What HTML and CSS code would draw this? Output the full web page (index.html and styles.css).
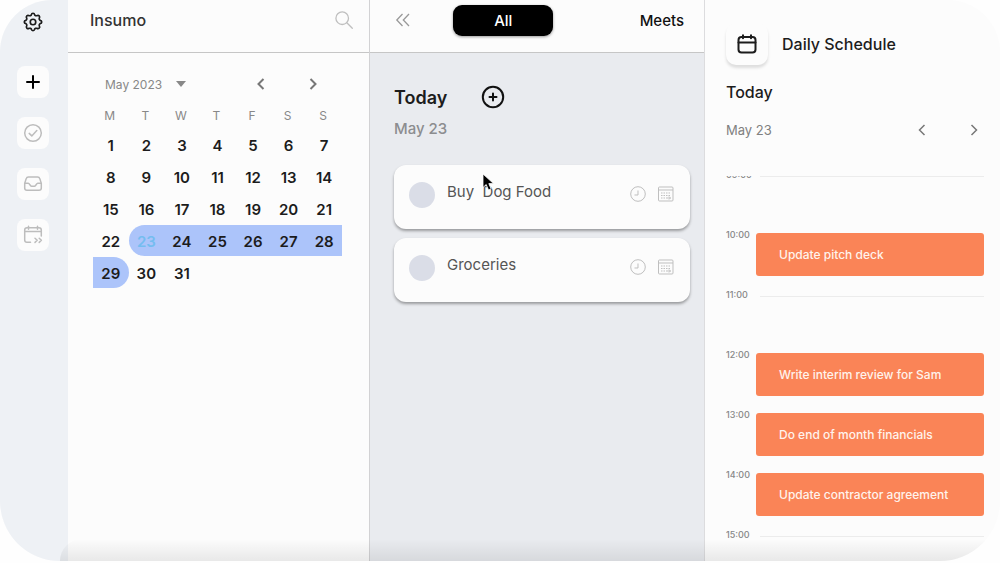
FILE: index.html
```html
<!DOCTYPE html>
<html lang="en">

<head>
    <meta charset="UTF-8">
    <meta name="viewport" content="width=device-width, initial-scale=1.0">
    <title>Insumo</title>
    <link rel="stylesheet" href="styles.css">
</head>

<body>
    <div class="app">
        <nav class="sidebar">
            <button class="side-btn settings" aria-label="Settings">
                <svg width="20" height="20" viewBox="0 0 24 24" fill="none" stroke="currentColor" stroke-width="2" stroke-linejoin="round">
                    <path d="M10 3.600Q10.300 1.500 12 1.500T14 3.600L15.200 4.500 16.500 4.500Q18.200 3.300 19.400 4.600T19.500 7.500L19.500 8.800 20.400 10Q22.500 10.300 22.500 12T20.400 14L19.500 15.200 19.500 16.500Q20.700 18.200 19.400 19.400T16.500 19.500L15.200 19.500 14 20.400Q13.700 22.500 12 22.500T10 20.400L8.800 19.500 7.500 19.500Q5.800 20.700 4.600 19.400T4.500 16.500L4.500 15.200 3.600 14Q1.500 13.700 1.500 12T3.600 10L4.500 8.800 4.500 7.500Q3.300 5.800 4.600 4.600T7.500 4.500L8.800 4.500z" />
                    <circle cx="12" cy="12" r="3.300" />
                </svg>
            </button>
            <button class="side-btn dark" aria-label="Add">
                <svg width="18" height="18" viewBox="0 0 18 18" fill="none" stroke="currentColor" stroke-width="2" stroke-linecap="round">
                    <path d="M9 3v12M3 9h12" />
                </svg>
            </button>
            <button class="side-btn" aria-label="Tasks">
                <svg width="20" height="20" viewBox="0 0 20 20" fill="none" stroke="currentColor" stroke-width="1.5" stroke-linecap="round" stroke-linejoin="round">
                    <circle cx="10" cy="10" r="8.3" />
                    <path d="M6.2 10.4l2.6 2.5 5-5.3" />
                </svg>
            </button>
            <button class="side-btn" aria-label="Inbox">
                <svg width="20" height="20" viewBox="0 0 20 20" fill="none" stroke="currentColor" stroke-width="1.5" stroke-linecap="round" stroke-linejoin="round">
                    <path d="M5.5 3h9c1.5 0 2 .7 2.400 1.900l1.400 4.600v4.500c0 1.500-.8 2.300-2.300 2.300H4c-1.500 0-2.300-.8-2.300-2.300V9.500l1.400-4.600C3.500 3.700 4 3 5.500 3z" />
                    <path d="M1.900 9.300h3.300c1.600 0 1.600 2.900 3.300 2.900h3c1.700 0 1.700-2.900 3.300-2.900h3.300" />
                </svg>
            </button>
            <button class="side-btn" aria-label="Upcoming">
                <svg width="20" height="20" viewBox="0 0 20 20" fill="none" stroke="currentColor" stroke-width="1.500" stroke-linecap="round" stroke-linejoin="round">
                    <path d="M7.500 17.300H4c-1.500 0-2.300-.8-2.300-2.300V5c0-1.500.8-2.300 2.300-2.300h12c1.500 0 2.300.8 2.300 2.300v6M1.700 6.600h16.600M5.500 1.200v3M14.500 1.200v3M12 13.200l2.200 2.100-2.200 2.100M16.200 13.200l2.200 2.100-2.200 2.100" />
                </svg>
            </button>
        </nav>

        <section class="calendar-panel">
            <header class="bar">
                <h1>Insumo</h1>
                <button class="icon-btn pale" aria-label="Search">
                    <svg width="20" height="20" viewBox="0 0 20 20" fill="none" stroke="currentColor" stroke-width="1.300" stroke-linecap="round">
                        <circle cx="8.200" cy="8.200" r="6.300" />
                        <path d="M12.800 12.800l5.500 5.500" />
                    </svg>
                </button>
            </header>
            <div class="calendar">
                <div class="month-row">
                    <div class="month">
                        <select id="month" aria-label="Month">
                            <option>May 2023</option>
                        </select>
                        <svg width="10" height="6" viewBox="0 0 10 6" fill="currentColor">
                            <path d="M0 0h10L5 6z" />
                        </svg>
                    </div>
                    <div class="month-nav">
                        <button class="icon-btn" aria-label="Previous month">
                            <svg width="20" height="20" viewBox="0 0 20 20" fill="none" stroke="currentColor" stroke-width="2">
                                <path d="M12.500 5l-5 5 5 5" />
                            </svg>
                        </button>
                        <button class="icon-btn" aria-label="Next month">
                            <svg width="20" height="20" viewBox="0 0 20 20" fill="none" stroke="currentColor" stroke-width="2">
                                <path d="M7.500 5l5 5-5 5" />
                            </svg>
                        </button>
                    </div>
                </div>
                <table class="days">
                    <thead>
                        <tr><th>M</th><th>T</th><th>W</th><th>T</th><th>F</th><th>S</th><th>S</th></tr>
                    </thead>
                    <tbody>
                        <tr><td>1</td><td>2</td><td>3</td><td>4</td><td>5</td><td>6</td><td>7</td></tr>
                        <tr><td>8</td><td>9</td><td>10</td><td>11</td><td>12</td><td>13</td><td>14</td></tr>
                        <tr><td>15</td><td>16</td><td>17</td><td>18</td><td>19</td><td>20</td><td>21</td></tr>
                        <tr>
                            <td>22</td>
                            <td class="range first">23</td>
                            <td class="range">24</td>
                            <td class="range">25</td>
                            <td class="range">26</td>
                            <td class="range">27</td>
                            <td class="range">28</td>
                        </tr>
                        <tr><td class="range last">29</td><td>30</td><td>31</td><td></td><td></td><td></td><td></td></tr>
                    </tbody>
                </table>
            </div>
        </section>

        <main class="tasks-panel">
            <header class="bar">
                <button class="icon-btn collapse" aria-label="Collapse">
                    <svg width="16" height="16" viewBox="0 0 16 16" fill="none" stroke="currentColor" stroke-width="1.300">
                        <path d="M7.500 2L1.800 8l5.700 6M14 2L8.300 8l5.700 6" />
                    </svg>
                </button>
                <button class="tab active">All</button>
                <button class="tab">Meets</button>
            </header>
            <div class="tasks">
                <div class="tasks-title">
                    <h2>Today</h2>
                    <button class="icon-btn add" aria-label="Add task">
                        <svg width="24" height="24" viewBox="0 0 24 24" fill="none" stroke="currentColor" stroke-width="2" stroke-linecap="round">
                            <circle cx="12" cy="12" r="10.200" />
                            <path d="M12 8.500v7M8.500 12h7" />
                        </svg>
                    </button>
                </div>
                <p class="tasks-date">May 23</p>
                <div class="card">
                    <input type="checkbox" id="task1">
                    <label for="task1">Buy&nbsp; Dog Food</label>
                    <button class="icon-btn pale" aria-label="Set time">
                        <svg width="18" height="18" viewBox="0 0 18 18" fill="none" stroke="currentColor">
                            <circle cx="9" cy="9" r="7.300" />
                            <path d="M9 5.500V10H5.500" />
                        </svg>
                    </button>
                    <button class="icon-btn pale" aria-label="Set date">
                        <svg width="18" height="18" viewBox="0 0 18 18" fill="none" stroke="currentColor">
                            <rect x="1.500" y="2" width="14.500" height="14" rx="1" />
                            <path d="M1.500 5h14.500" />
                            <path d="M4 8h10M4 10.500h10M4 13h6" stroke-dasharray="1.500 1" />
                            <path d="M10 13h3.500M12 11.500l1.500 1.500-1.500 1.500" />
                        </svg>
                    </button>
                    <svg class="cursor" width="13" height="19" viewBox="0 0 13 19" stroke="#fff" stroke-width=".8">
                        <path d="M1 1v13.500l3.200-3 2.300 5.500 2.600-1.100-2.300-5.300h4.700z" />
                    </svg>
                </div>
                <div class="card">
                    <input type="checkbox" id="task2">
                    <label for="task2">Groceries</label>
                    <button class="icon-btn pale" aria-label="Set time">
                        <svg width="18" height="18" viewBox="0 0 18 18" fill="none" stroke="currentColor">
                            <circle cx="9" cy="9" r="7.300" />
                            <path d="M9 5.500V10H5.500" />
                        </svg>
                    </button>
                    <button class="icon-btn pale" aria-label="Set date">
                        <svg width="18" height="18" viewBox="0 0 18 18" fill="none" stroke="currentColor">
                            <rect x="1.500" y="2" width="14.500" height="14" rx="1" />
                            <path d="M1.500 5h14.500" />
                            <path d="M4 8h10M4 10.500h10M4 13h6" stroke-dasharray="1.500 1" />
                            <path d="M10 13h3.500M12 11.500l1.500 1.500-1.500 1.500" />
                        </svg>
                    </button>
                </div>
            </div>
        </main>

        <aside class="schedule">
            <header class="schedule-title">
                <span class="tile">
                    <svg width="20" height="20" viewBox="0 0 20 20" fill="none" stroke="currentColor" stroke-width="2" stroke-linecap="round" stroke-linejoin="round">
                        <rect x="1.500" y="3" width="17" height="15.500" rx="3" />
                        <path d="M1.500 8.500h17M6 1.200v3M14 1.200v3" />
                    </svg>
                </span>
                <h2>Daily Schedule</h2>
            </header>
            <h3>Today</h3>
            <div class="date-row">
                <span>May 23</span>
                <div class="date-nav">
                    <button class="icon-btn" aria-label="Previous day">
                        <svg width="20" height="20" viewBox="0 0 20 20" fill="none" stroke="currentColor" stroke-width="1.500">
                            <path d="M12.500 5l-5 5 5 5" />
                        </svg>
                    </button>
                    <button class="icon-btn" aria-label="Next day">
                        <svg width="20" height="20" viewBox="0 0 20 20" fill="none" stroke="currentColor" stroke-width="1.500">
                            <path d="M7.500 5l5 5-5 5" />
                        </svg>
                    </button>
                </div>
            </div>
            <div class="hours">
                <ol>
                    <li><time>09:00</time></li>
                    <li><time>10:00</time><div class="event">Update pitch deck</div></li>
                    <li><time>11:00</time></li>
                    <li><time>12:00</time><div class="event">Write interim review for Sam</div></li>
                    <li><time>13:00</time><div class="event">Do end of month financials</div></li>
                    <li><time>14:00</time><div class="event">Update contractor agreement</div></li>
                    <li><time>15:00</time></li>
                </ol>
            </div>
        </aside>
    </div>
</body>

</html>
```

FILE: styles.css
```css
* {
    box-sizing: border-box;
}

body {
    margin: 0;
    background: #fefefe;
    color: #1c1c1c;
    font-family: Inter, "Liberation Sans", sans-serif;
}

h1,
h2,
h3,
p,
ol {
    margin: 0;
    padding: 0;
    font-weight: 500;
}

button {
    padding: 0;
    border: none;
    background: none;
    font-family: inherit;
    cursor: pointer;
}

svg {
    display: block;
}

.app {
    position: relative;
    display: grid;
    grid-template-columns: 68px 301fr 336fr 295fr;
    height: calc(100vh - 2px);
    border-radius: 52px 52px 60px 60px;
    overflow: hidden;
    background: #fcfcfc;
}

/* soft shade along the bottom edge */
.app::after {
    content: "";
    position: absolute;
    left: 60px;
    right: 0;
    bottom: 0;
    height: 22px;
    border-top-left-radius: 22px;
    background: linear-gradient(transparent, rgba(0, 0, 0, 0.08));
    pointer-events: none;
}

/* Sidebar */
.sidebar {
    display: flex;
    flex-direction: column;
    align-items: center;
    gap: 19px;
    padding-top: 6px;
    padding-right: 2px;
    background: #eef1f5;
}

.side-btn {
    display: flex;
    align-items: center;
    justify-content: center;
    width: 32px;
    height: 32px;
    border-radius: 8px;
    background: #fcfcfc;
    color: #bdbdbd;
}

.side-btn.dark {
    color: #000;
}

.side-btn.settings {
    margin-bottom: 9px;
    background: none;
    color: #1c1c1c;
}

.bar {
    display: flex;
    align-items: center;
    justify-content: space-between;
    height: 53px;
    padding-bottom: 12px;
    border-bottom: 1px solid #c6c6c6;
    background: #fcfcfc;
}

.icon-btn {
    color: #777;
}

.icon-btn.pale {
    color: #bfbfbf;
}

/* Calendar */
.calendar-panel .bar {
    padding-left: 22px;
    padding-right: 15px;
}

h1 {
    color: #333;
    font-size: 16px;
}

.calendar {
    padding: 20px 27px 0 25px;
}

.month-row {
    display: flex;
    align-items: center;
    justify-content: space-between;
    height: 22px;
    padding-left: 12px;
    padding-right: 19px;
    color: #888;
}

.month {
    display: flex;
    align-items: center;
}

.month select {
    width: 82px;
    margin-right: -11px;
    padding: 0;
    border: none;
    background: none;
    color: #888;
    font-family: inherit;
    font-size: 12px;
    appearance: none;
}

.month svg {
    pointer-events: none;
}

.month-nav,
.date-nav {
    display: flex;
    gap: 32px;
}

.days {
    width: 100%;
    margin-top: 9px;
    border-spacing: 0 1px;
    table-layout: fixed;
    text-align: center;
}

.days th {
    height: 23px;
    padding: 0 2px 2px 0;
    color: #888;
    font-size: 12px;
    font-weight: 400;
}

.days td {
    height: 31px;
    padding: 1px 0 0;
    font-size: 15px;
    font-weight: 600;
}

.days .range {
    background: #acc4fa;
}

.days .first {
    border-radius: 16px 0 0 16px;
    color: #74bdf0;
}

.days .last {
    border-radius: 0 16px 16px 0;
}

/* Tasks */
.tasks-panel {
    border-left: 1px solid #d2d2d4;
    border-right: 1px solid #dcdcde;
    background: #e9ebef;
}

.tasks-panel .bar {
    padding-left: 25px;
    padding-right: 20px;
}

.collapse {
    color: #999;
}

.tab {
    color: #111;
    font-size: 15px;
    font-weight: 500;
}

.tab.active {
    width: 100px;
    height: 31px;
    margin-left: -44px;
    border-radius: 9px;
    background: #000;
    color: #fff;
    box-shadow: 0 1px 3px rgba(0, 0, 0, 0.4);
}

.tasks {
    padding: 32px 14px 0 24px;
}

.tasks-title {
    display: flex;
    align-items: center;
    gap: 34px;
}

.tasks-title h2 {
    font-size: 18px;
    font-weight: 600;
}

.add {
    color: #111;
}

.tasks-date {
    margin: 10px 0 26px;
    color: #8c8d8f;
    font-size: 15px;
    font-weight: 500;
    line-height: 20px;
}

.card {
    position: relative;
    display: flex;
    align-items: flex-start;
    height: 64px;
    margin-bottom: 9px;
    padding: 17px 15px;
    border-radius: 12px;
    background: #fcfcfc;
    box-shadow: 0 2px 3px rgba(0, 0, 0, 0.35);
}

.card input {
    width: 26px;
    height: 26px;
    margin: 0 12px 0 0;
    border-radius: 50%;
    background: #dadde7;
    appearance: none;
}

.card input:checked {
    background: #acc4fa;
}

.card label {
    flex: 1;
    color: #555;
    font-size: 15px;
    line-height: 20px;
}

.card .icon-btn {
    margin: 3px 0 0 10px;
}

.cursor {
    position: absolute;
    left: 88px;
    top: 8px;
}

/* Schedule */
.schedule {
    display: flex;
    flex-direction: column;
    min-height: 0;
    padding: 23px 16px 0 21px;
}

.schedule-title {
    display: flex;
    align-items: center;
    gap: 14px;
}

.tile {
    display: flex;
    align-items: center;
    justify-content: center;
    width: 42px;
    height: 42px;
    border-radius: 10px;
    background: #fcfcfc;
    box-shadow: 0 3px 3px rgba(0, 0, 0, 0.12);
}

.schedule h2,
.schedule h3 {
    font-size: 16px;
    line-height: 20px;
}

.schedule h3 {
    margin-top: 17px;
}

.date-row {
    display: flex;
    align-items: center;
    justify-content: space-between;
    margin-top: 18px;
    color: #808080;
    font-size: 13px;
}

.hours {
    flex: 1;
    min-height: 0;
    margin-top: 36px;
    overflow: hidden;
}

.hours ol {
    margin-top: -8px;
    list-style: none;
}

.hours li {
    display: grid;
    grid-template-columns: 30px 1fr;
    align-items: start;
    height: 60px;
    background: linear-gradient(#ececec, #ececec) 34px 8px / 100% 1px no-repeat;
}

.hours time {
    color: #888;
    font-size: 9px;
    font-weight: 500;
    line-height: 14px;
}

.event {
    height: 43px;
    margin-top: 5px;
    padding-left: 23px;
    border-radius: 3px;
    background: #fa8457;
    color: #fff3ec;
    font-size: 12px;
    font-weight: 500;
    line-height: 43px;
}
```
